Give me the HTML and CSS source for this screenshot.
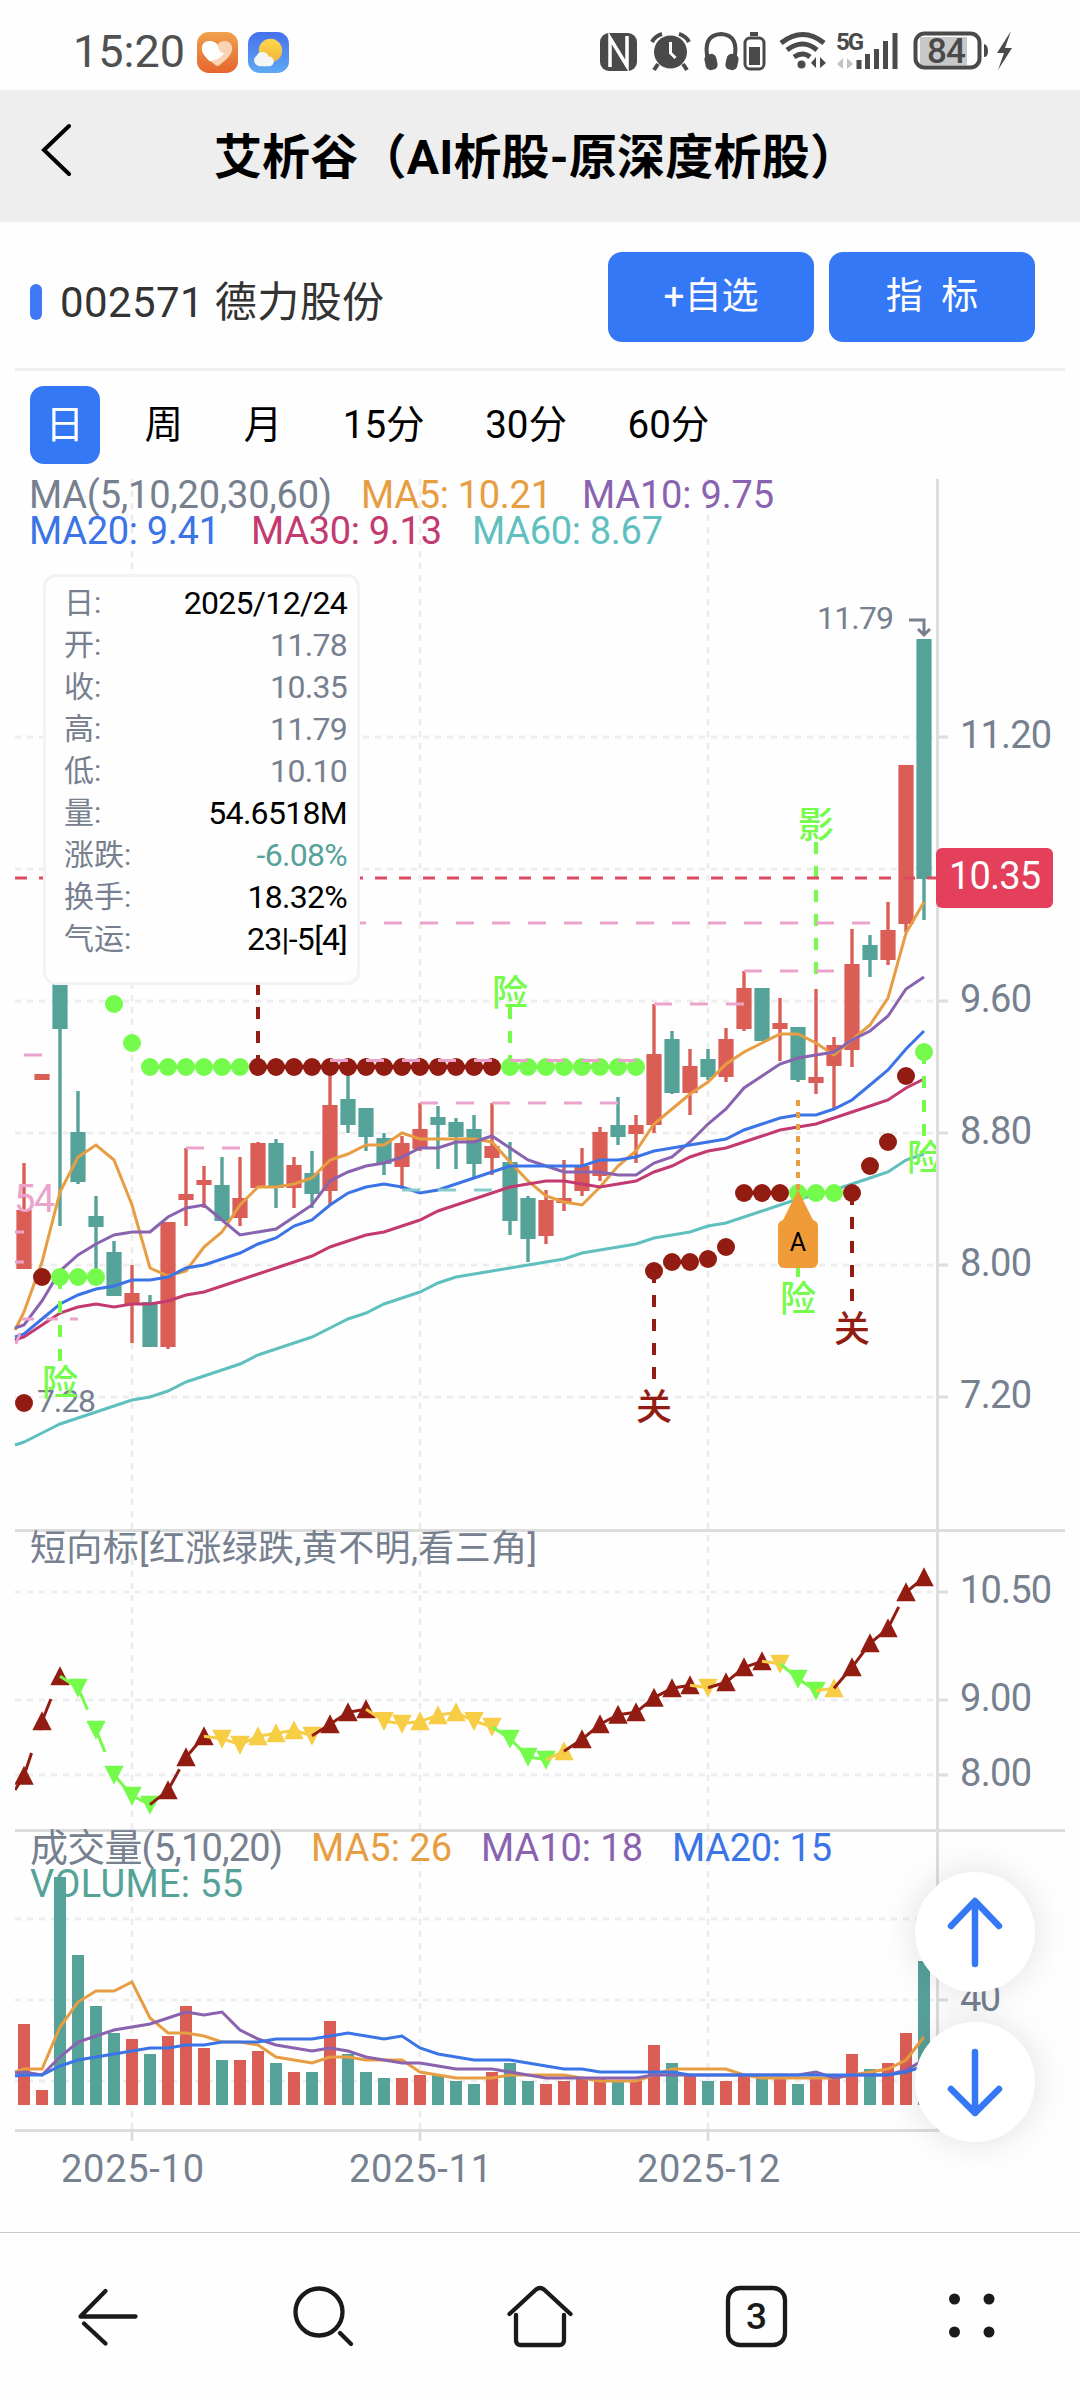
FILE: index.html
```html
<!DOCTYPE html>
<html lang="zh-CN">
<head>
	<meta charset="UTF-8">
	<title>艾析谷</title>
	<link rel="stylesheet" href="styles.css">
</head>
<body>
	<div class="status">
		<span class="time">15:20</span>
		<svg class="app" viewBox="0 0 42 42">
			<defs>
				<linearGradient id="g1" x1="0" y1="0" x2="0" y2="1"><stop offset="0" stop-color="#f0a14c"/><stop offset="1" stop-color="#e6652f"/></linearGradient>
				<linearGradient id="g2" x1="0" y1="0" x2="0" y2="1"><stop offset="0" stop-color="#4670ee"/><stop offset="1" stop-color="#5fa9f3"/></linearGradient>
				<linearGradient id="g3" x1="0" y1="0" x2="0" y2="1"><stop offset="0" stop-color="#fbd84b"/><stop offset="1" stop-color="#f5b53a"/></linearGradient>
			</defs>
			<rect width="42" height="42" rx="12" fill="url(#g1)"/>
			<path d="M21 13c4-6 15-5 15 4 0 7-8 13-13 17q-2 1.500-4 0C14 30 5 24 5 17c0-9 11-10 16-4z" fill="#f9d3b4"/>
			<path d="M21 13C16 7 5 8 5 17c0 5 4 9 8 13 8-1 13-5 15-9-3 1-5-1-7-8z" fill="#fff"/>
		</svg>
		<svg class="app" viewBox="0 0 42 42">
			<rect width="42" height="42" rx="12" fill="url(#g2)"/>
			<circle cx="23" cy="19" r="12" fill="url(#g3)"/>
			<path d="M12 35a6 6 0 0 1-3-11 6.500 6.500 0 0 1 12 1 5 5 0 0 1 1 10z" fill="#f4f6f6"/>
		</svg>
		<!-- nfc, alarm, headset, wifi, signal, battery -->
		<svg class="sys" viewBox="596 28 420 48">
			<g fill="#4a4a4a">
				<rect x="600" y="33" width="37" height="38" rx="9"/>
				<path d="M610 67V38l17 28V36" stroke="#fff" stroke-width="3.500" fill="none"/>
				<circle cx="670.500" cy="52" r="16.500"/>
				<path d="M652 42q3-6 10-8M679 34q7 2 10 8M658 64l-4 6M683 64l4 6" stroke="#4a4a4a" stroke-width="4" fill="none"/>
				<path d="M670.500 42v11l5 5" stroke="#fff" stroke-width="3" fill="none"/>
				<path d="M708 60q-6-25 13-26 19 1 13 26" fill="none" stroke="#4a4a4a" stroke-width="4"/>
				<rect x="705" y="54" width="12" height="16" rx="5" transform="rotate(-12 711 62)"/>
				<rect x="726" y="54" width="12" height="16" rx="5" transform="rotate(12 732 62)"/>
				<rect x="750" y="32" width="8" height="4"/>
				<rect x="745" y="38" width="19" height="31" rx="5" fill="none" stroke="#4a4a4a" stroke-width="3"/>
				<rect x="749" y="47" width="11" height="18"/>
				<path d="M781 43q22-17 43 0M787 50q16-12 30 0M794 57q9-6 16 0" fill="none" stroke="#4a4a4a" stroke-width="5"/>
				<circle cx="801.500" cy="64.500" r="4"/>
				<path d="M816 57v11l-5-5zM820 68V57l6 6z"/>
				<text class="net" x="836" y="50">5G</text>
				<path d="M843 58v11l-6-5zM847 69V58l6 6z" fill="#c2c2c2"/>
				<path d="M859 60v9M867.500 54v15M876.500 49v20M885.500 41v28M895 33v36" stroke="#4a4a4a" stroke-width="5"/>
				<rect x="920" y="37" width="47" height="28" fill="#c8c8c8"/>
				<rect x="915.500" y="33.500" width="64" height="34" rx="9" fill="none" stroke="#4a4a4a" stroke-width="4"/>
				<path d="M984 44q4 1 4 7t-4 6z"/>
				<path d="M1011 31l-14 22h7l-6 17 14-22h-7z"/>
				<text class="bat" x="927" y="62.500" textLength="39">84</text>
			</g>
		</svg>
	</div>
	<div class="header">
		<svg class="back" viewBox="0 0 30 54"><path d="M28 3L3 27l25 24"/></svg>
		<div class="title">艾析谷（AI析股-原深度析股）</div>
	</div>
	<div class="stock">
		<span class="mark"></span>
		<span class="name">002571 德力股份</span>
		<button class="btn">+自选</button>
		<button class="btn">指&nbsp; 标</button>
	</div>
	<div class="tabs">
		<span class="tab tab-selected">日</span>
		<span class="tab">周</span>
		<span class="tab">月</span>
		<span class="tab">15分</span>
		<span class="tab">30分</span>
		<span class="tab">60分</span>
	</div>
	<div class="chart">
		<svg id="kline" viewBox="0 476 1080 1756"></svg>
		<div class="tip">
			<div><span>日:</span><b class="dark">2025/12/24</b></div>
			<div><span>开:</span><b>11.78</b></div>
			<div><span>收:</span><b>10.35</b></div>
			<div><span>高:</span><b>11.79</b></div>
			<div><span>低:</span><b>10.10</b></div>
			<div><span>量:</span><b class="dark">54.6518M</b></div>
			<div><span>涨跌:</span><b class="down">-6.08%</b></div>
			<div><span>换手:</span><b class="dark">18.32%</b></div>
			<div><span>气运:</span><b class="dark">23|-5[4]</b></div>
		</div>
		<div class="float">
			<span class="round"><svg viewBox="0 0 120 120"><path d="M60 92V31M36 54l24-25 24 25"/></svg></span>
			<span class="round"><svg viewBox="0 0 120 120"><path d="M60 30v61M36 67l24 24 24-24"/></svg></span>
		</div>
	</div>
	<div class="nav">
		<span><svg viewBox="0 0 72 72"><path d="M33.500 11L8.500 36.500h55M12 43.500l21.500 20"/></svg></span>
		<span><svg viewBox="0 0 72 72"><circle cx="31" cy="32" r="23.500"/><path d="M52 53l11 11"/></svg></span>
		<span><svg viewBox="0 0 72 72"><path d="M5.500 34L32 9.500q4-3 8 0L66.500 34M12 35v25q0 5 5 5h38q5 0 5-5V35"/></svg></span>
		<span><svg viewBox="0 0 72 72"><rect x="8" y="8" width="57" height="57" rx="12"/><text x="36.500" y="49">3</text></svg></span>
		<span><svg viewBox="0 0 72 72"><g class="dots"><circle cx="18.500" cy="19" r="5.500"/><circle cx="53" cy="19" r="5.500"/><circle cx="18.500" cy="52" r="5.500"/><circle cx="53" cy="52" r="5.500"/></g></svg></span>
	</div>
<script src="script.js"></script>
</body>
</html>
```

FILE: styles.css
```css
body{
	margin: 0;
	width: 1080px;
	background: #fefefe;
	font-family: Roboto, "Noto Sans CJK SC", sans-serif;
	color: #000;
}
.status{
	display: flex;
	align-items: center;
	height: 90px;
	padding: 14px 64px 0 73px;
	box-sizing: border-box;
}
.time{
	width: 124px;
	font-size: 45px;
	color: #505050;
	line-height: 60px;
}
.app{
	width: 41px;
	height: 41px;
	margin-right: 10px;
}
.sys{
	width: 420px;
	height: 48px;
	margin-left: auto;
}
.net{
	font-size: 24px;
	font-weight: 700;
	letter-spacing: -2px;
}
.bat{
	font-size: 35px;
	font-weight: 500;
}
.header{
	display: grid;
	grid-template-columns: 43px 1fr 43px;
	align-items: center;
	height: 132px;
	background: #eee;
	position: relative;
}
.back{
	grid-column: 2;
	grid-row: 1;
	width: 30px;
	height: 54px;
	margin-left: -2px;
	margin-top: -12px;
	fill: none;
	stroke: #000;
	stroke-width: 4;
	stroke-linecap: round;
}
.title{
	grid-column: 2;
	grid-row: 1;
	padding: 0 8px 6px 0;
	text-align: center;
	font-size: 48px;
	font-weight: 700;
	letter-spacing: .2px;
	white-space: nowrap;
}
.stock{
	display: flex;
	align-items: flex-start;
	height: 116px;
	margin: 0 15px;
	padding: 30px 30px 0 15px;
	border-bottom: 3px solid #eee;
}
.mark{
	width: 12px;
	height: 36px;
	margin-top: 32px;
	border-radius: 6px;
	background: #3f78f4;
}
.name{
	flex: 1;
	margin: 21px 0 0 18px;
	font-size: 42px;
	line-height: 60px;
	letter-spacing: .4px;
	color: #333;
}
.btn{
	width: 206px;
	height: 90px;
	margin-left: 15px;
	padding: 0 0 8px;
	border: 0;
	border-radius: 14px;
	background: #3478f6;
	color: #fff;
	font-family: inherit;
	font-size: 37px;
}
.name + .btn{
	margin-left: 0;
}
.tabs{
	display: flex;
	gap: 29.600px;
	height: 90px;
	padding: 15px 30px 0;
}
.tab{
	height: 78px;
	padding: 0 15.500px;
	border-radius: 14px;
	font-size: 38.500px;
	line-height: 78px;
}
.tab-selected{
	background: #3478f6;
	color: #fff;
}
.chart{
	position: relative;
	height: 1756px;
}
#kline{
	display: block;
	width: 1080px;
	height: 1756px;
	overflow: visible;
}
#kline text{
	font-size: 38px;
	fill: #76808f;
}
#kline .cn{
	font-size: 36px;
}
#kline .small{
	font-size: 32px;
}
#kline .mid{
	text-anchor: middle;
	font-weight: 500;
}
.tip{
	position: absolute;
	left: 43px;
	top: 98px;
	width: 317px;
	height: 411px;
	box-sizing: border-box;
	padding: 5px 10px 0 18px;
	border: 3px solid #f2f3f4;
	border-radius: 13px;
	background: #fefefe;
}
.tip div{
	display: flex;
	justify-content: space-between;
	height: 42px;
	font-size: 30px;
	line-height: 42px;
	color: #76808f;
}
.tip b{
	font-size: 32px;
	font-weight: 400;
	letter-spacing: -.7px;
}
.tip .dark{
	color: #000;
}
.tip .down{
	color: #55a299;
}
.float{
	position: absolute;
	left: 915px;
	top: 1396px;
	display: flex;
	flex-direction: column;
	gap: 30px;
}
.round{
	width: 120px;
	height: 120px;
	border-radius: 50%;
	background: #fff;
	box-shadow: 0 0 36px rgba(0, 0, 0, .12);
}
.round svg{
	display: block;
	fill: none;
	stroke: #3478f6;
	stroke-width: 6.500;
	stroke-linecap: round;
	stroke-linejoin: round;
}
.nav{
	display: flex;
	height: 168px;
	box-sizing: border-box;
	border-top: 1px solid #c8c8c8;
}
.nav span{
	flex: 1;
	display: flex;
	justify-content: center;
	padding-top: 47px;
}
.nav svg{
	width: 72px;
	height: 72px;
	fill: none;
	stroke: #1a1a1a;
	stroke-width: 4.300;
	stroke-linecap: round;
	stroke-linejoin: round;
}
.nav text{
	font-size: 37px;
	font-weight: 500;
	text-anchor: middle;
	fill: #1a1a1a;
	stroke: none;
}
.nav .dots{
	fill: #1a1a1a;
	stroke: none;
}
```

FILE: script.js
```js
var RED = '#db5e56', GREEN = '#55a299', LIME = '#75fb4c', DARK = '#921c12', YELLOW = '#f7cd46';
var ORANGE = '#e79d42', PURPLE = '#8963b0', BLUE = '#3b74e7', ROSE = '#c33a71', TEAL = '#60bfbf';
var PINK = '#eba3cc', LINE = '#ddd', GRID = '#ededed', GREY = '#76808f';
var out = [];

function px(i) {
	return 24 + i * 18;
}
function line(x1, y1, x2, y2, color, w, dash) {
	out.push('<line x1="' + x1 + '" y1="' + y1 + '" x2="' + x2 + '" y2="' + y2 + '" stroke="' + color + '" stroke-width="' + w + '"' + (dash ? ' stroke-dasharray="' + dash + '"' : '') + '/>');
}
function rect(x, y, w, h, color, r) {
	out.push('<rect x="' + x + '" y="' + y + '" width="' + w + '" height="' + h + '" fill="' + color + '" rx="' + (r || 0) + '"/>');
}
function text(x, y, str, color, len, cls) {
	out.push('<text x="' + x + '" y="' + y + '" class="' + (cls || '') + '" style="fill:' + color + '"' + (len ? ' textLength="' + len + '"' : '') + '>' + str + '</text>');
}
// the first value is the point cut off at the left edge
function curve(list, color, fn) {
	var pts = list.map(function(v, k) {
		return (k ? px(k - 1) : 15) + ',' + (fn ? fn(v) : v);
	});
	out.push('<polyline points="' + pts.join(' ') + '" fill="none" stroke="' + color + '" stroke-width="3"/>');
}

// grid
[737, 869, 1001, 1133, 1265, 1397, 1592, 1700, 1775, 1919, 2000, 2081].forEach(function(y) {
	line(15, y, 936, y, GRID, 3, '6 6');
});
[132, 420, 708].forEach(function(x) {
	line(x, 479, x, 2130, GRID, 3, '6 6');
	line(x, 2132, x, 2141, LINE, 3);
});
[737, 1001, 1133, 1265, 1397, 1592, 1700, 1775, 2000].forEach(function(y) {
	line(939, y, 948, y, LINE, 3);
});

// candles: color, high, top, bottom, low
var candles = [
	['r',1163,1210,1269,1269],['r',1074,1074,1080,1080],['g',930,960,1029,1226],['g',1091,1132,1182,1184],['g',1196,1216,1227,1270],
	['g',1241,1252,1296,1296],['r',1265,1293,1305,1343],['g',1295,1302,1347,1347],['r',1222,1222,1347,1349],['r',1148,1194,1200,1226],
	['r',1166,1180,1185,1208],['g',1157,1185,1221,1221],['r',1157,1198,1218,1226],['r',1142,1143,1188,1188],['g',1139,1143,1188,1208],
	['r',1157,1165,1188,1208],['g',1151,1173,1194,1208],['r',1067,1105,1191,1205],['g',1067,1099,1125,1133],['g',1108,1108,1137,1151],
	['g',1133,1138,1164,1175],['r',1136,1143,1167,1189],['r',1103,1129,1149,1151],['g',1106,1117,1125,1169],['g',1118,1122,1137,1169],
	['g',1115,1129,1164,1178],['r',1103,1146,1158,1175],['g',1142,1162,1221,1235],['g',1196,1198,1239,1262],['r',1190,1200,1236,1244],
	['r',1160,1198,1203,1211],['r',1148,1166,1191,1196],['r',1127,1132,1176,1181],['g',1097,1125,1137,1145],['r',1115,1125,1134,1163],
	['r',1004,1054,1125,1133],['g',1031,1039,1093,1094],['r',1049,1066,1093,1115],['g',1049,1059,1077,1080],['r',1028,1039,1077,1082],
	['r',971,988,1029,1031],['g',988,988,1041,1041],['r',998,1023,1029,1061],['g',1027,1027,1080,1082],['r',989,1077,1083,1094],
	['r',1037,1045,1066,1108],['r',929,964,1050,1067],['g',935,945,960,977],['r',902,930,960,965],['r',765,765,924,932],['g',639,639,879,920]
];
candles.forEach(function(c, i) {
	var color = c[0] == 'r' ? RED : GREEN;
	line(px(i), c[1], px(i), c[4], color, 3.4);
	rect(px(i) - 7.6, c[2], 15.2, c[3] - c[2], color);
});

// moving averages
curve([1330,1312,1262,1192,1157,1145,1160,1205,1268,1276,1271,1247,1232,1205,1187,1187,1184,1178,1160,1154,1145,1145,1133,1139,1139,1139,1139,1142,1162,1181,1196,1202,1205,1187,1166,1151,1124,1109,1094,1082,1064,1052,1043,1034,1034,1043,1055,1040,1025,998,933,902], ORANGE);
curve([1328,1325,1301,1271,1255,1244,1235,1232,1232,1217,1208,1205,1220,1235,1232,1229,1217,1205,1181,1172,1166,1163,1157,1148,1148,1142,1142,1136,1148,1160,1166,1172,1172,1172,1175,1175,1163,1157,1142,1124,1109,1088,1076,1064,1058,1055,1052,1040,1031,1016,989,977], PURPLE);
curve([1337,1334,1319,1304,1295,1289,1286,1280,1280,1277,1268,1265,1259,1253,1244,1238,1226,1220,1205,1193,1187,1184,1187,1193,1190,1184,1178,1172,1166,1166,1166,1166,1166,1160,1160,1157,1151,1148,1145,1142,1139,1130,1124,1118,1115,1115,1109,1100,1085,1070,1049,1031], BLUE);
curve([1340,1337,1325,1313,1307,1304,1307,1304,1304,1301,1295,1292,1286,1280,1274,1268,1262,1256,1247,1241,1235,1232,1226,1220,1211,1205,1199,1193,1187,1184,1181,1181,1184,1187,1184,1181,1172,1166,1157,1151,1148,1142,1136,1130,1127,1124,1118,1112,1106,1100,1088,1079], ROSE);
curve([1445,1442,1433,1424,1418,1412,1406,1400,1397,1391,1382,1376,1370,1364,1355,1349,1343,1337,1328,1319,1313,1304,1298,1292,1283,1277,1274,1271,1268,1265,1262,1259,1253,1250,1247,1244,1238,1235,1232,1226,1223,1217,1211,1205,1199,1195,1190,1184,1178,1172,1160,1154], TEAL);

// signal stems
line(60, 1277, 60, 1362, LIME, 4, '12 12');
line(258, 1067, 258, 983, DARK, 4, '12 12');
line(510, 1067, 510, 1007, LIME, 4, '12 12');
line(816, 974, 816, 842, LIME, 4, '12 12');
line(654, 1271, 654, 1380, DARK, 4, '12 12');
line(852, 1193, 852, 1302, DARK, 4, '12 12');
line(924, 1052, 924, 1137, LIME, 4, '12 12');
line(798, 1265, 798, 1277, LIME, 4);

// signal dots: from, to, y, color
[
	[0,0,1403,DARK],[1,1,1277,DARK],[2,4,1277,LIME],[5,5,1004,LIME],[6,6,1043,LIME],[7,12,1067,LIME],[13,26,1067,DARK],[27,34,1067,LIME],
	[35,35,1271,DARK],[36,37,1262,DARK],[38,38,1259,DARK],[39,39,1247,DARK],[40,42,1193,DARK],[43,45,1193,LIME],[46,46,1193,DARK],
	[47,47,1166,DARK],[48,48,1142,DARK],[49,49,1076,DARK],[50,50,1052,LIME]
].forEach(function(d) {
	if(d[1] > d[0]) line(px(d[0]), d[2], px(d[1]), d[2], d[3], 4);
	for(var i = d[0]; i <= d[1]; i++) {
		out.push('<circle cx="' + px(i) + '" cy="' + d[2] + '" r="9" fill="' + d[3] + '"/>');
	}
});

// pressure and support levels
[[24,42,1055],[186,240,1148],[330,636,1060.5],[420,618,1103],[654,744,1004],[744,834,971],[60,870,923]].forEach(function(p) {
	line(p[0], p[2], p[1], p[2], PINK, 3, '18 18');
});
line(15, 1232, 24, 1232, PINK, 3);
line(15, 1262, 24, 1262, PINK, 3);
line(22, 1319, 78, 1319, PINK, 3, '12 12');
line(20, 1333, 16, 1344, PINK, 3);
line(402, 1190, 492, 1190, '#86cbcb', 3, '18 18');
text(14, 1212, '54', PINK, 41);

// last price
line(15, 878, 936, 878, '#dc4a61', 3, '12 12');

text(37, 1412, '7.28', GREY, 59, 'small');
text(817, 629, '11.79', GREY, 77, 'small');
out.push('<path d="M909 620h15v14M918 629l6 6 6-6" fill="none" stroke="' + GREY + '" stroke-width="3"/>');
text(60, 1396, '险', LIME, 0, 'cn mid');
text(510, 1006, '险', LIME, 0, 'cn mid');
text(816, 838, '影', LIME, 0, 'cn mid');
text(798, 1312, '险', LIME, 0, 'cn mid');
text(654, 1420, '关', DARK, 0, 'cn mid');
text(852, 1342, '关', DARK, 0, 'cn mid');
out.push('<clipPath id="edge"><rect x="15" y="476" width="921" height="1660"/></clipPath><g clip-path="url(#edge)">');
text(925, 1171, '险', LIME, 0, 'cn mid');
out.push('</g>');

// tag A
line(798, 1100, 798, 1192, ORANGE, 4, '6 6');
out.push('<path d="M798 1190l16 32h-32z" fill="#ef9b38"/>');
rect(778, 1220, 40, 48, '#ef9b38', 6);
out.push('<text x="798" y="1251" text-anchor="middle" style="fill:#000;font-size:25px">A</text>');

// short trend: y, direction and color
var trend = [
	[1775.7,'ur'],[1721.3,'ur'],[1676.3,'ur'],[1687.7,'dg'],[1729.7,'dg'],[1774.7,'dg'],[1795.7,'dg'],[1804.7,'dg'],[1790.3,'ur'],[1757.3,'ur'],
	[1736.3,'ur'],[1738.7,'dy'],[1744.7,'dy'],[1736.3,'uy'],[1733.3,'uy'],[1730.3,'uy'],[1735.7,'dy'],[1724.3,'ur'],[1712.3,'ur'],[1709.3,'ur'],
	[1721,'dy'],[1723.7,'dy'],[1721.3,'uy'],[1715.3,'uy'],[1712.3,'uy'],[1721,'dy'],[1726.7,'dy'],[1738.7,'dg'],[1756.7,'dg'],[1759.7,'dg'],
	[1751.3,'uy'],[1739.3,'ur'],[1724.3,'ur'],[1714.7,'ur'],[1712.3,'ur'],[1697.7,'ur'],[1688.3,'ur'],[1685.3,'ur'],[1687.7,'dy'],[1682.3,'ur'],
	[1667.3,'ur'],[1661.3,'ur'],[1663.7,'dy'],[1678.7,'dg'],[1690.7,'dg'],[1688.3,'uy'],[1667.3,'ur'],[1643.3,'ur'],[1628.3,'ur'],[1592.3,'ur'],[1577.3,'ur']
];
var tone = {r: DARK, g: LIME, y: YELLOW};
out.push('<g clip-path="url(#edge)">');
trend.forEach(function(t, i) {
	var s = t[1][0] == 'u' ? 1 : -1;
	out.push('<path d="M' + px(i) + ' ' + (t[0] - 10 * s) + 'l9.700 ' + 19 * s + 'h-19.400z" fill="' + tone[t[1][1]] + '"/>');
});
line(15, 1790, 24, 1775.7, DARK, 3);
for(var i = 1; i < trend.length; i++) {
	line(px(i - 1), trend[i - 1][0], px(i), trend[i][0], tone[trend[i][1][1]], 3, '24 24');
}
out.push('</g>');

// volume
[81,15,228,150,99,72,66,51,69,99,57,45,45,54,42,33,33,84,51,33,27,27,30,30,24,21,33,42,24,21,24,27,27,24,24,60,42,30,24,24,30,27,27,21,27,27,51,36,42,72,144].forEach(function(h, i) {
	rect(px(i) - 6, 2105 - h, 12, h, candles[i][0] == 'r' ? RED : GREEN);
});
function vol(h) {
	return 2105 - h;
}
curve([33,36,36,78,103,114,114,123,87,72,72,69,63,63,60,48,45,42,48,48,45,45,45,33,30,27,27,27,30,30,30,30,27,24,24,24,30,36,36,36,36,30,27,27,27,27,27,30,33,36,45,68], ORANGE, vol);
curve([32,33,30,48,63,69,75,78,81,87,93,90,93,75,66,60,57,54,57,54,48,45,42,42,39,36,36,36,33,30,27,27,27,27,27,27,30,30,30,30,30,30,30,30,30,33,27,30,30,30,35,45], PURPLE, vol);
curve([29,30,30,39,45,48,51,54,57,57,60,60,63,63,63,66,66,66,69,72,69,66,69,57,51,48,45,45,45,42,39,36,36,33,33,33,33,33,30,30,30,30,30,30,30,30,30,30,30,30,33,39], BLUE, vol);

// axes
line(937.5, 479, 937.5, 2132, LINE, 3);
line(15, 1530.5, 1065, 1530.5, LINE, 3);
line(15, 1830.5, 1065, 1830.5, LINE, 3);
line(15, 2130.5, 936, 2130.5, LINE, 3);
[[748,'11.20',92],[1012,'9.60',72],[1144,'8.80',72],[1276,'8.00',72],[1408,'7.20',72],[1603,'10.50',92],[1711,'9.00',72],[1786,'8.00',72],[2011,'40',41]].forEach(function(a) {
	text(960, a[0], a[1], GREY, a[2]);
});
text(61, 2182, '2025-10', GREY, 143);
text(349, 2182, '2025-11', GREY, 143);
text(637, 2182, '2025-12', GREY, 143);
rect(936, 848, 117, 60, '#e4405b', 6);
text(949, 889, '10.35', '#fff', 92);

// legends
text(29, 508, 'MA(5,10,20,30,60)', GREY, 303);
text(361, 508, 'MA5: 10.21', ORANGE, 191);
text(582, 508, 'MA10: 9.75', PURPLE, 192);
text(29, 544, 'MA20: 9.41', BLUE, 191);
text(251, 544, 'MA30: 9.13', ROSE, 191);
text(472, 544, 'MA60: 8.67', TEAL, 191);
text(30, 1561, '短向标[红涨绿跌,黄不明,看三角]', GREY, 507, 'cn');
text(30, 1861, '成交量(5,10,20)', GREY, 253);
text(311, 1861, 'MA5: 26', ORANGE, 141);
text(481, 1861, 'MA10: 18', PURPLE, 162);
text(672, 1861, 'MA20: 15', BLUE, 160);
text(30, 1897, 'VOLUME: 55', GREEN, 213);

document.getElementById('kline').innerHTML = out.join('');
```
